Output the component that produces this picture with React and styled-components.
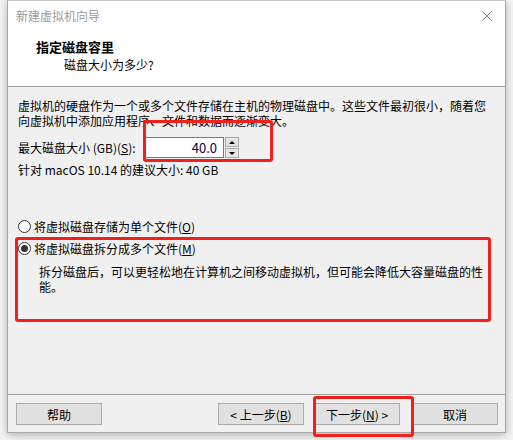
import React from "react";
import styled, { createGlobalStyle } from "styled-components";

const GlobalStyle = createGlobalStyle`
  html, body {
    margin: 0;
    padding: 0;
    background: #f4f4f4;
  }
  body {
    font-family: "Noto Sans CJK SC", "Noto Sans", sans-serif;
    font-size: 12px;
    color: #000;
  }
`;

const Stage = styled.div`
  position: relative;
  width: 513px;
  height: 440px;
  overflow: hidden;
`;

const Window = styled.div`
  margin-left: 7px;
  width: 497px;
  height: 431px;
  border: 1px solid #a8a8a8;
  border-top-color: #c8c8c8;
  background: #f0f0f0;
  box-shadow: 0 2px 8px rgba(0, 0, 0, 0.28);
  display: flex;
  flex-direction: column;
`;

const TitleBar = styled.div`
  height: 29px;
  background: #fff;
  display: flex;
  align-items: center;
  justify-content: space-between;
  padding: 0 8px 0 8px;
  color: #9a9a9a;
  line-height: 29px;
`;

const CloseIcon = styled.svg`
  width: 12px;
  height: 12px;
  margin-right: 4px;
`;

const Header = styled.div`
  height: 57px;
  background: #fff;
  border-bottom: 1px solid #a0a0a0;
  padding-left: 28px;
  padding-top: 8px;
  box-sizing: border-box;
`;

const HeaderTitle = styled.div`
  font-weight: bold;
  font-size: 13px;
  line-height: 18px;
`;

const HeaderSub = styled.div`
  padding-left: 28px;
  line-height: 18px;
`;

const Content = styled.div`
  flex: 1;
  padding: 11px 10px 0 10px;
  display: flex;
  flex-direction: column;
`;

const Para = styled.p`
  margin: 0;
  line-height: 15px;
`;

const SizeRow = styled.div`
  display: flex;
  align-items: center;
  margin-top: 9px;
  height: 21px;
`;

const Label = styled.span`
  width: 127px;
  white-space: nowrap;
`;

const SpinInput = styled.div`
  width: 79px;
  border: 1px solid #7a7a7a;
  background: #fff;
  text-align: right;
  padding-right: 6px;
  box-sizing: border-box;
  height: 21px;
  line-height: 19px;
  color: #00003a;
  font-size: 13px;
`;

const SpinButtons = styled.div`
  display: flex;
  flex-direction: column;
  margin-left: 1px;
  gap: 1px;
`;

const SpinBtn = styled.div`
  width: 14px;
  height: 10px;
  border: 1px solid #acacac;
  background: #e5e5e5;
  box-sizing: border-box;
  display: flex;
  align-items: center;
  justify-content: center;
`;

const Arrow = styled.span`
  width: 0;
  height: 0;
  border-left: 3px solid transparent;
  border-right: 3px solid transparent;
  ${(p) =>
    p.$up
      ? "border-bottom: 3px solid #000;"
      : "border-top: 3px solid #000;"}
`;

const Hint = styled.div`
  margin-top: 4px;
  line-height: 15px;
`;

const RadioGroup = styled.div`
  margin-top: 42px;
  display: flex;
  flex-direction: column;
  gap: 7px;
`;

const RadioRow = styled.label`
  display: flex;
  align-items: center;
  gap: 3px;
  line-height: 15px;
`;

const RadioDot = styled.span`
  width: 13px;
  height: 13px;
  border-radius: 50%;
  border: 1px solid #333;
  background: #fff;
  box-sizing: border-box;
  display: flex;
  align-items: center;
  justify-content: center;
  &::after {
    content: "";
    width: 7px;
    height: 7px;
    border-radius: 50%;
    background: ${(p) => (p.$checked ? "#333" : "transparent")};
  }
`;

const Desc = styled.p`
  margin: 8px 0 0 21px;
  line-height: 15px;
  width: 458px;
`;

const U = styled.span`
  text-decoration: underline;
`;

const Footer = styled.div`
  height: 38px;
  border-top: 1px solid #a0a0a0;
  display: flex;
  align-items: flex-start;
  padding: 8px 7px 0 8px;
  box-sizing: border-box;
`;

const Button = styled.div`
  width: 86px;
  height: 22px;
  border: 1px solid #adadad;
  background: #e1e1e1;
  box-sizing: border-box;
  display: flex;
  align-items: center;
  justify-content: center;
  margin-left: ${(p) => p.$gap || 0}px;
  white-space: nowrap;
`;

const Spacer = styled.div`
  flex: 1;
`;

const RedBox = styled.div`
  position: absolute;
  border: 3px solid #f0201a;
  border-radius: 3px;
  box-sizing: border-box;
  pointer-events: none;
`;

const boxes = [
  { left: 143, top: 120, width: 130, height: 42 },
  { left: 15, top: 237, width: 476, height: 85 },
  { left: 313, top: 396, width: 101, height: 41 },
];

export default function App() {
  return (
    <>
      <GlobalStyle />
      <Stage>
        <Window>
          <TitleBar>
            <span>新建虚拟机向导</span>
            <CloseIcon viewBox="0 0 12 12">
              <path d="M1 1 L11 11 M11 1 L1 11" stroke="#8a8a8a" strokeWidth="1" fill="none" />
            </CloseIcon>
          </TitleBar>
          <Header>
            <HeaderTitle>指定磁盘容里</HeaderTitle>
            <HeaderSub>磁盘大小为多少?</HeaderSub>
          </Header>
          <Content>
            <Para>
              虚拟机的硬盘作为一个或多个文件存储在主机的物理磁盘中。这些文件最初很小，随着您
              向虚拟机中添加应用程序、文件和数据而逐渐变大。
            </Para>
            <SizeRow>
              <Label>
                最大磁盘大小 (GB)(<U>S</U>):
              </Label>
              <SpinInput>40.0</SpinInput>
              <SpinButtons>
                <SpinBtn><Arrow $up /></SpinBtn>
                <SpinBtn><Arrow /></SpinBtn>
              </SpinButtons>
            </SizeRow>
            <Hint>针对 macOS 10.14 的建议大小: 40 GB</Hint>
            <RadioGroup>
              <RadioRow>
                <RadioDot />
                <span>将虚拟磁盘存储为单个文件(<U>O</U>)</span>
              </RadioRow>
              <RadioRow>
                <RadioDot $checked />
                <span>将虚拟磁盘拆分成多个文件(<U>M</U>)</span>
              </RadioRow>
            </RadioGroup>
            <Desc>
              拆分磁盘后，可以更轻松地在计算机之间移动虚拟机，但可能会降低大容量磁盘的性能。
            </Desc>
          </Content>
          <Footer>
            <Button>帮助</Button>
            <Spacer />
            <Button>&lt; 上一步(<U>B</U>)</Button>
            <Button $gap={10}>下一步(<U>N</U>) &gt;</Button>
            <Button $gap={12}>取消</Button>
          </Footer>
        </Window>
        {boxes.map((b, i) => (
          <RedBox key={i} style={b} />
        ))}
      </Stage>
    </>
  );
}
